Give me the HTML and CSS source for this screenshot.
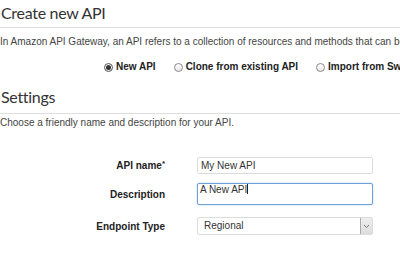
FILE: index.html
```html
<!DOCTYPE html>
<html>
<head>
<meta charset="UTF-8">
<title>Create new API</title>
<link rel="stylesheet" href="styles.css">
</head>
<body>
<div class="page">
<h1 class="title">Create new API</h1>
<p class="intro first">In Amazon API Gateway, an API refers to a collection of resources and methods that can be invoked through HTTPS endpoints.</p>
<div class="choices">
<label class="choice"><span class="radio checked"></span>New API</label>
<label class="choice"><span class="radio"></span>Clone from existing API</label>
<label class="choice"><span class="radio"></span>Import from Swagger</label>
</div>
<h2 class="title settings">Settings</h2>
<p class="intro">Choose a friendly name and description for your API.</p>
<div class="form">
<div class="item">
<label class="name">API name<span class="req">*</span></label>
<div class="field text">My New API</div>
</div>
<div class="item">
<label class="name">Description</label>
<div class="field area">A New API<span class="caret"></span></div>
</div>
<div class="item">
<label class="name">Endpoint Type</label>
<div class="field select"><span class="value">Regional</span><span class="arrow"><svg width="7" height="5" viewBox="0 0 7 5"><path d="M1 1 L3.5 3.5 L6 1" fill="none" stroke="#777" stroke-width="1"/></svg></span></div>
</div>
</div>
</div>
</body>
</html>
```

FILE: styles.css
```css
html,body{
margin:0;
padding:0;
background:#fff;
}
.page{
width:400px;
height:255px;
overflow:hidden;
font-family:"Liberation Sans",Arial,sans-serif;
font-size:10px;
color:#444;
}
.title{
margin:0;
padding:3px 0 5px 1px;
font-family:Lato,"Open Sans",sans-serif;
font-size:16px;
font-weight:normal;
letter-spacing:-0.3px;
line-height:19px;
color:#333;
border-bottom:1px solid #dedede;
}
.settings{
margin-top:11px;
padding-bottom:7px;
}
.intro{
margin:3px 0 0 0;
line-height:12px;
white-space:nowrap;
}
.intro.first{
margin-top:8px;
}
.choices{
display:flex;
gap:18px;
margin-top:13px;
padding-left:104px;
height:12px;
line-height:12px;
white-space:nowrap;
}
.choice{
display:flex;
align-items:center;
font-weight:bold;
color:#222;
}
.radio{
width:7px;
height:7px;
border:1px solid #888;
border-radius:50%;
background:linear-gradient(#fff,#e8e8e8);
margin-right:3px;
position:relative;
}
.radio.checked{
border-color:#555;
}
.radio.checked:after{
content:"";
position:absolute;
left:1px;
top:1px;
width:5px;
height:5px;
border-radius:50%;
background:#333;
}
.form{
margin-top:28px;
}
.item{
display:flex;
align-items:center;
margin-bottom:9px;
}
.item .name{
width:165px;
text-align:right;
margin-right:32px;
font-weight:bold;
color:#222;
}
.req{
font-size:8px;
vertical-align:top;
line-height:8px;
}
.field{
box-sizing:border-box;
width:176px;
border:1px solid #dcdcdc;
border-radius:2px;
background:#fff;
color:#333;
white-space:nowrap;
}
.text{
height:17px;
line-height:15px;
padding-left:3px;
}
.area{
height:22px;
line-height:11px;
padding-left:2px;
border-color:#6f9fd8;
box-shadow:0 0 2px rgba(102,160,230,.5);
}
.item:nth-child(2){
margin-bottom:12px;
}
.caret{
display:inline-block;
width:1px;
height:10px;
background:#222;
vertical-align:-1px;
}
.select{
display:flex;
height:18px;
line-height:16px;
}
.select .value{
flex:1;
padding-left:6px;
}
.select .arrow{
width:11px;
border-left:1px solid #aaa;
background:linear-gradient(#eee,#ddd);
display:flex;
align-items:center;
justify-content:center;
}
```
